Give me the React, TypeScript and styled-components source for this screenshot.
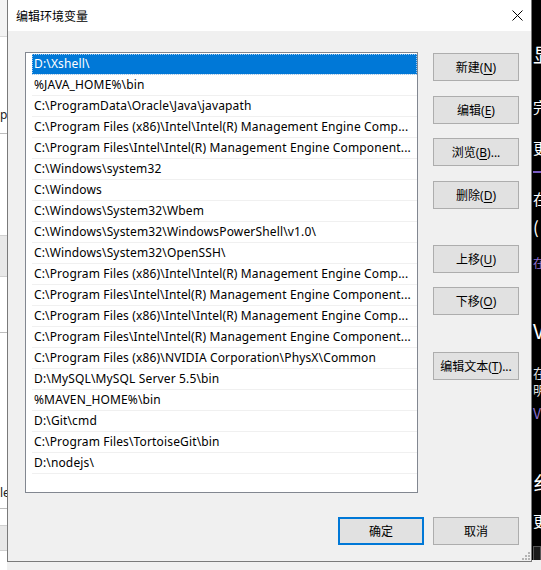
import styled, { createGlobalStyle } from "styled-components"

const GlobalStyle = createGlobalStyle`
  html, body {
    margin: 0;
    padding: 0;
  }
  body {
    width: 541px;
    height: 570px;
    overflow: hidden;
    background: #f0f0f0;
    font-family: "Noto Sans", "Noto Sans CJK SC", sans-serif;
  }
`

const paths = [
    "D:\\Xshell\\",
    "%JAVA_HOME%\\bin",
    "C:\\ProgramData\\Oracle\\Java\\javapath",
    "C:\\Program Files (x86)\\Intel\\Intel(R) Management Engine Comp...",
    "C:\\Program Files\\Intel\\Intel(R) Management Engine Component...",
    "C:\\Windows\\system32",
    "C:\\Windows",
    "C:\\Windows\\System32\\Wbem",
    "C:\\Windows\\System32\\WindowsPowerShell\\v1.0\\",
    "C:\\Windows\\System32\\OpenSSH\\",
    "C:\\Program Files (x86)\\Intel\\Intel(R) Management Engine Comp...",
    "C:\\Program Files\\Intel\\Intel(R) Management Engine Component...",
    "C:\\Program Files (x86)\\Intel\\Intel(R) Management Engine Comp...",
    "C:\\Program Files\\Intel\\Intel(R) Management Engine Component...",
    "C:\\Program Files (x86)\\NVIDIA Corporation\\PhysX\\Common",
    "D:\\MySQL\\MySQL Server 5.5\\bin",
    "%MAVEN_HOME%\\bin",
    "D:\\Git\\cmd",
    "C:\\Program Files\\TortoiseGit\\bin",
    "D:\\nodejs\\",
]

const sideButtons = [
    { label: "新建", key: "N", gap: 0 },
    { label: "编辑", key: "E", gap: 15 },
    { label: "浏览", key: "B", gap: 14, more: true },
    { label: "删除", key: "D", gap: 15 },
    { label: "上移", key: "U", gap: 36 },
    { label: "下移", key: "O", gap: 14 },
    { label: "编辑文本", key: "T", gap: 37, more: true },
]

// bits of the dark window peeking out on the right: centre y, size, colour
const rightBits = [
    { text: "显", y: 55, size: 20, color: "#fff" },
    { text: "完", y: 106, size: 15, color: "#fff" },
    { text: "更", y: 147, size: 15, color: "#fff" },
    { rule: true, y: 172, size: 2, color: "#7a5cc4" },
    { text: "在", y: 198, size: 15, color: "#fff" },
    { text: "(", y: 226, size: 17, color: "#fff" },
    { text: "在", y: 263, size: 12, color: "#8e6fd0" },
    { text: "V", y: 331, size: 20, color: "#fff" },
    { text: "在", y: 372, size: 13, color: "#ddd" },
    { text: "明", y: 389, size: 13, color: "#ddd" },
    { text: "V", y: 413, size: 14, color: "#8e6fd0" },
    { text: "纟", y: 483, size: 20, color: "#fff" },
    { text: "更", y: 520, size: 15, color: "#fff" },
]

const App = () => {
    let bottom = 0
    const placed = rightBits.map(b => {
        const top = Math.round(b.y - b.size / 2)
        const gap = top - bottom
        bottom = top + b.size
        return { ...b, gap }
    })

    return (
        <>
            <GlobalStyle />
            <Page>
                <LeftStrip>
                    <LeftTop />
                    <LeftText $gap={70}>p</LeftText>
                    <LeftLine $gap={10} />
                    <LeftShade $gap={101} $height={42} />
                    <LeftLine $gap={55} />
                    <LeftText $gap={152}>le</LeftText>
                    <LeftLine $gap={7} />
                    <LeftShade $gap={16} $height={26} />
                </LeftStrip>
                <Middle>
                    <Dialog>
                        <TitleBar>
                            <Title>编辑环境变量</Title>
                            <CloseButton>
                                <svg width="11" height="11" viewBox="0 0 11 11">
                                    <path d="M0.5 0.5 L10.5 10.5 M10.5 0.5 L0.5 10.5" stroke="#000" strokeWidth="1" />
                                </svg>
                            </CloseButton>
                        </TitleBar>
                        <Body>
                            <TopArea>
                                <ListBox>
                                    {paths.map((p, i) => (
                                        <Row key={i} $selected={i === 0}>{p}</Row>
                                    ))}
                                </ListBox>
                                <ButtonColumn>
                                    {sideButtons.map(b => (
                                        <Button key={b.key} $gap={b.gap}>
                                            {b.label}(<u>{b.key}</u>){b.more ? "..." : ""}
                                        </Button>
                                    ))}
                                </ButtonColumn>
                            </TopArea>
                            <BottomBar>
                                <Button $default>确定</Button>
                                <Button>取消</Button>
                            </BottomBar>
                            <Grip>
                                <svg width="8" height="8" viewBox="0 0 8 8">
                                    <rect x="6" y="0" width="2" height="2" fill="#b4b4b4" />
                                    <rect x="3" y="3" width="2" height="2" fill="#b4b4b4" />
                                    <rect x="6" y="3" width="2" height="2" fill="#b4b4b4" />
                                    <rect x="0" y="6" width="2" height="2" fill="#b4b4b4" />
                                    <rect x="3" y="6" width="2" height="2" fill="#b4b4b4" />
                                    <rect x="6" y="6" width="2" height="2" fill="#b4b4b4" />
                                </svg>
                            </Grip>
                        </Body>
                    </Dialog>
                </Middle>
                <RightStrip>
                    {placed.map((b, i) => b.rule
                        ? <RightRule key={i} $gap={b.gap} $color={b.color} />
                        : <RightChar key={i} $gap={b.gap} $size={b.size} $color={b.color}>{b.text}</RightChar>
                    )}
                    <RightBox />
                </RightStrip>
            </Page>
        </>
    )
}

const Page = styled.div`
display: flex;
width: 541px;
height: 570px;
overflow: hidden;
`;

const LeftStrip = styled.div`
width: 7px;
flex-shrink: 0;
background: #fff;
display: flex;
flex-direction: column;
overflow: hidden;
`;

const LeftTop = styled.div`
height: 36px;
flex-shrink: 0;
background: #f3f3f3;
border-bottom: 1px solid #d9d9d9;
`;

const LeftText = styled.div<{ $gap: number }>`
margin-top: ${p => p.$gap}px;
height: 16px;
flex-shrink: 0;
font-size: 12px;
line-height: 16px;
color: #222;
white-space: nowrap;
`;

const LeftLine = styled.div<{ $gap: number }>`
margin-top: ${p => p.$gap}px;
height: 1px;
flex-shrink: 0;
background: #bdbdbd;
`;

const LeftShade = styled.div<{ $gap: number, $height: number }>`
margin-top: ${p => p.$gap}px;
height: ${p => p.$height}px;
flex-shrink: 0;
box-sizing: border-box;
background: #e8e8e8;
border-top: 1px solid #d0d0d0;
border-bottom: 1px solid #d0d0d0;
`;

const Middle = styled.div`
width: 525px;
flex-shrink: 0;
`;

const Dialog = styled.div`
width: 525px;
height: 562px;
box-sizing: border-box;
border: 1px solid #7a7a7a;
border-top: none;
background: #f0f0f0;
display: flex;
flex-direction: column;
`;

const TitleBar = styled.div`
height: 31px;
background: #fff;
display: flex;
align-items: center;
justify-content: space-between;
padding-left: 8px;
flex-shrink: 0;
`;

const Title = styled.div`
font-family: "Noto Sans CJK SC", sans-serif;
font-size: 12px;
color: #000;
`;

const CloseButton = styled.div`
width: 28px;
height: 31px;
display: flex;
align-items: center;
justify-content: center;
`;

const Body = styled.div`
flex: 1;
position: relative;
padding: 21px 12px 16px 17px;
display: flex;
flex-direction: column;
`;

const TopArea = styled.div`
display: flex;
gap: 15px;
`;

const ListBox = styled.div`
width: 393px;
height: 441px;
box-sizing: border-box;
border: 1px solid #828790;
background: #fff;
padding: 1px 0 0 6px;
overflow: hidden;
`;

const Row = styled.div<{ $selected?: boolean }>`
height: 21px;
box-sizing: border-box;
border-bottom: 1px solid #f0f0f0;
padding-left: 2px;
font-family: "Noto Sans", sans-serif;
font-size: 12px;
letter-spacing: 0.15px;
line-height: 20px;
white-space: nowrap;
overflow: hidden;
color: ${p => p.$selected ? "#fff" : "#000"};
background: ${p => p.$selected ? "#0078d7" : "transparent"};
outline: ${p => p.$selected ? "1px dotted #9fc8ee" : "none"};
outline-offset: -1px;
`;

const ButtonColumn = styled.div`
display: flex;
flex-direction: column;
padding-top: 1px;
`;

const Button = styled.div<{ $gap?: number, $default?: boolean }>`
width: 86px;
height: 28px;
box-sizing: border-box;
margin-top: ${p => p.$gap || 0}px;
border: ${p => p.$default ? "2px solid #0078d7" : "1px solid #adadad"};
background: #e1e1e1;
display: flex;
align-items: center;
justify-content: center;
font-family: "Noto Sans", "Noto Sans CJK SC", sans-serif;
font-size: 12px;
color: #000;
white-space: nowrap;
u {
    text-underline-offset: 2px;
}
`;

const BottomBar = styled.div`
display: flex;
justify-content: flex-end;
gap: 9px;
margin-top: 24px;
`;

const Grip = styled.div`
position: absolute;
right: 1px;
bottom: 1px;
line-height: 0;
`;

const RightStrip = styled.div`
width: 9px;
flex-shrink: 0;
background: #000;
display: flex;
flex-direction: column;
overflow: hidden;
height: 560px;
padding-left: 1px;
box-sizing: border-box;
`;

const RightChar = styled.div<{ $gap: number, $size: number, $color: string }>`
margin-top: ${p => p.$gap}px;
height: ${p => p.$size}px;
flex-shrink: 0;
font-family: "Noto Sans CJK SC", sans-serif;
font-size: ${p => p.$size}px;
line-height: ${p => p.$size}px;
color: ${p => p.$color};
white-space: nowrap;
`;

const RightRule = styled.div<{ $gap: number, $color: string }>`
margin-top: ${p => p.$gap}px;
height: 2px;
flex-shrink: 0;
background: ${p => p.$color};
`;

const RightBox = styled.div`
margin-top: 18px;
height: 16px;
flex-shrink: 0;
border: 1px solid #555;
background: #1a1a1a;
`;

export default App
